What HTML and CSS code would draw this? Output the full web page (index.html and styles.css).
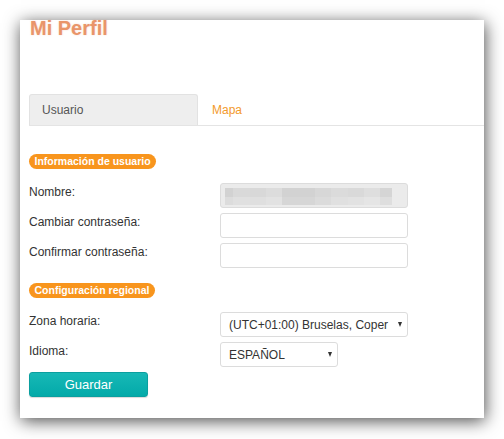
FILE: index.html
```html
<!DOCTYPE html>
<html lang="es">
<head>
<meta charset="utf-8">
<title>Mi Perfil</title>
<link rel="stylesheet" href="styles.css">
</head>
<body>
<div class="panel">
  <h1 class="title">Mi Perfil</h1>
  <div class="tabs">
    <div class="tab active">Usuario</div>
    <div class="tab link">Mapa</div>
  </div>

  <div class="badge badge-first">Información de usuario</div>
  <div class="form-grid">
    <div class="label">Nombre:</div>
    <div class="input disabled"><div class="mosaic"><div class="mosaic-row top"></div><div class="mosaic-row bottom"></div></div></div>
    <div class="label">Cambiar contraseña:</div>
    <div class="input"></div>
    <div class="label">Confirmar contraseña:</div>
    <div class="input"></div>
  </div>

  <div class="badge badge-second">Configuración regional</div>
  <div class="form-grid">
    <div class="label">Zona horaria:</div>
    <div class="select wide"><span class="select-text">(UTC+01:00) Bruselas, Coper</span><span class="arrow"></span></div>
    <div class="label">Idioma:</div>
    <div class="select narrow"><span class="select-text">ESPAÑOL</span><span class="arrow"></span></div>
  </div>
  <button class="save" type="button">Guardar</button>
</div>
</body>
</html>
```

FILE: styles.css
```css
html, body {
  margin: 0;
  padding: 0;
  background: #ffffff;
}

body {
  font-family: "Liberation Sans", Arial, sans-serif;
  font-size: 12px;
  color: #333333;
  padding: 20px 0 21px 20px;
  overflow: hidden;
}

.panel {
  width: 464px;
  height: 398px;
  box-sizing: border-box;
  padding: 0 0 0 9px;
  background: #ffffff;
  box-shadow: 1px 3px 16px rgba(0, 0, 0, 0.7);
  display: flex;
  flex-direction: column;
  align-items: flex-start;
}

.title {
  margin: -2px 0 0 1px;
  font-size: 20px;
  line-height: 20px;
  font-weight: bold;
  color: #e9956a;
  text-shadow: 0 0 2px rgba(233, 149, 106, 0.35);
}

.tabs {
  margin-top: 56px;
  align-self: stretch;
  display: flex;
  border-bottom: 1px solid #e4e4e4;
}

.tab {
  height: 31px;
  box-sizing: border-box;
  display: flex;
  align-items: center;
  font-size: 12px;
}

.tab.active {
  width: 169px;
  padding-left: 12px;
  background: #eeeeee;
  border: 1px solid #e2e2e2;
  border-bottom: none;
  border-radius: 3px 3px 0 0;
  color: #555555;
}

.tab.link {
  padding-left: 14px;
  color: #f39a2c;
}

.badge {
  height: 15px;
  line-height: 15px;
  padding: 0 5.5px;
  border-radius: 8px;
  background: #f8951d;
  color: #ffffff;
  font-size: 10.5px;
  font-weight: bold;
}

.badge-first {
  margin-top: 28px;
}

.badge-second {
  margin-top: 15px;
}

.form-grid {
  margin-top: 14px;
  display: grid;
  grid-template-columns: 191px auto;
  row-gap: 5px;
  align-items: start;
}

.label {
  padding-top: 2px;
  line-height: 14px;
  color: #333333;
}

.input {
  width: 188px;
  height: 25px;
  box-sizing: border-box;
  border: 1px solid #dcdcdc;
  border-radius: 3px;
  background: #ffffff;
}

.input.disabled {
  background: #ebebeb;
  padding: 4px 0 0 4px;
}

.mosaic {
  width: 167px;
  height: 17px;
  display: flex;
  flex-direction: column;
}

.mosaic-row {
  flex: 1;
}

.mosaic-row.top {
  background: linear-gradient(to right,
    #d2d2d2 0 8px, #d9d9d9 8px 25px, #d8d8d8 25px 41px, #dcdcdc 41px 57px,
    #d2d2d2 57px 90px, #d7d7d7 90px 106px, #dbdbdb 106px 123px,
    #d9d9d9 123px 139px, #dedede 139px 155px, #d5d5d5 155px 167px);
}

.mosaic-row.bottom {
  background: linear-gradient(to right,
    #dcdcdc 0 8px, #e0e0e0 8px 25px, #dfdfdf 25px 41px, #e2e2e2 41px 57px,
    #d6d6d6 57px 90px, #dbdbdb 90px 106px, #e0e0e0 106px 123px,
    #e2e2e2 123px 139px, #e5e5e5 139px 155px, #dedede 155px 167px);
}

.select {
  height: 25px;
  box-sizing: border-box;
  border: 1px solid #dcdcdc;
  border-radius: 3px;
  background: #ffffff;
  display: flex;
  align-items: center;
  padding-left: 8px;
  color: #333333;
  font-size: 12px;
}

.select.wide {
  width: 188px;
}

.select.narrow {
  width: 118px;
}

.select-text {
  flex: 1;
  white-space: nowrap;
}

.arrow {
  flex: none;
  width: 0;
  height: 0;
  margin: 0 5px 0 4px;
  border-left: 2.5px solid transparent;
  border-right: 2.5px solid transparent;
  border-top: 5px solid #333333;
}

.save {
  margin-top: 5px;
  width: 119px;
  height: 25px;
  border: 1px solid #0b9f9f;
  border-radius: 3px;
  background: linear-gradient(#17b8b6, #03aaa9);
  color: #ffffff;
  font-family: "Liberation Sans", Arial, sans-serif;
  font-size: 13px;
  padding: 0;
  box-shadow: 0 1px 1px rgba(0, 0, 0, 0.15);
}
```
